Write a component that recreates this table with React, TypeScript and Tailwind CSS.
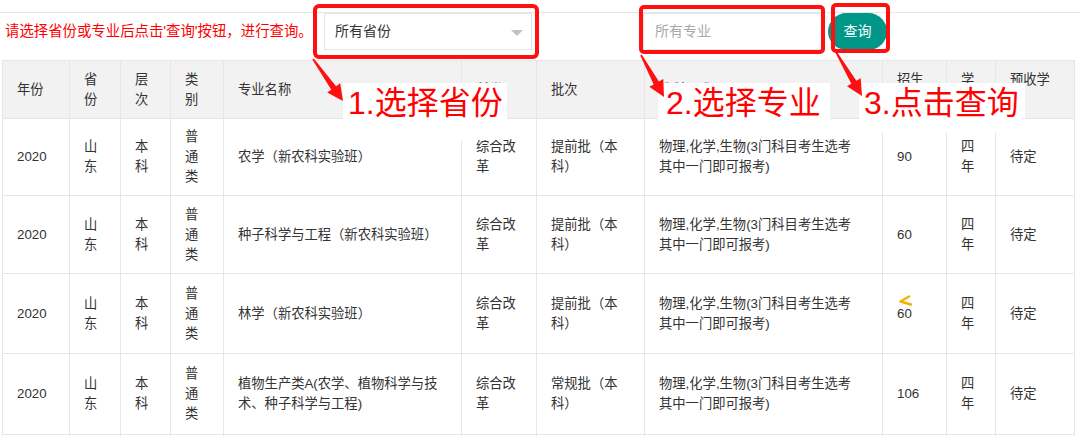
import React from 'react';

type Row = {
  major: string[];
  batch: string[];
  num: string;
  h: string;
  chevron?: boolean;
};

const rows: Row[] = [
  { major: ['农学（新农科实验班）'], batch: ['提前批（本', '科）'], num: '90', h: 'h-[77px]' },
  { major: ['种子科学与工程（新农科实验班）'], batch: ['提前批（本', '科）'], num: '60', h: 'h-[78px]' },
  { major: ['林学（新农科实验班）'], batch: ['提前批（本', '科）'], num: '60', h: 'h-[80px]', chevron: true },
  { major: ['植物生产类A(农学、植物科学与技', '术、种子科学与工程)'], batch: ['常规批（本', '科）'], num: '106', h: 'h-[81px]' },
  { major: ['园艺'], batch: ['常规批（本', '科）'], num: '80', h: 'h-[80px]' },
];

const GRID =
  'grid grid-cols-[67px_51px_50px_53px_238px_75px_108px_238px_64px_49px_79px]';

function Cell({ lines, className = '', children }: { lines?: string[]; className?: string; children?: React.ReactNode }) {
  return (
    <div className={`relative flex flex-col justify-center border-b border-r border-[#e6e6e6] pl-[14px] text-[13.3px] leading-[20px] ${className}`}>
      {lines?.map((l, i) => (
        <div key={i} className="whitespace-nowrap">
          {l}
        </div>
      ))}
      {children}
    </div>
  );
}

function arrowPoints(sx: number, sy: number, tx: number, ty: number) {
  const headLen = 16;
  const headHalf = 8;
  const s0 = 0.8;
  const s1 = 3;
  const dx = tx - sx;
  const dy = ty - sy;
  const L = Math.hypot(dx, dy);
  const ux = dx / L;
  const uy = dy / L;
  const nx = -uy;
  const ny = ux;
  const bx = tx - ux * headLen;
  const by = ty - uy * headLen;
  const pts = [
    [sx + nx * s0, sy + ny * s0],
    [bx + nx * s1, by + ny * s1],
    [bx + nx * headHalf, by + ny * headHalf],
    [tx, ty],
    [bx - nx * headHalf, by - ny * headHalf],
    [bx - nx * s1, by - ny * s1],
    [sx - nx * s0, sy - ny * s0],
  ];
  return pts.map((p) => `${p[0].toFixed(1)},${p[1].toFixed(1)}`).join(' ');
}

export default function App() {
  const header: { lines: string[] }[] = [
    { lines: ['年份'] },
    { lines: ['省', '份'] },
    { lines: ['层', '次'] },
    { lines: ['类', '别'] },
    { lines: ['专业名称'] },
    { lines: ['科类'] },
    { lines: ['批次'] },
    { lines: ['选科要求'] },
    { lines: ['招生', '计划'] },
    { lines: ['学', '制'] },
    { lines: ['预收学', '费'] },
  ];

  return (
    <div className="relative h-[436px] w-[1080px] overflow-hidden bg-white text-[#333] font-['Liberation_Sans','Noto_Sans_CJK_SC',sans-serif]">
      {/* filter bar */}
      <div className="pt-[12px]">
        <div className="flex h-[38px] items-start border-t border-[#e6e6e6]">
          <div className="flex h-[37px] w-[324px] items-center pl-[5px] text-[14.4px] text-[#ff0000] whitespace-nowrap">
            请选择省份或专业后点击'查询'按钮，进行查询。
          </div>
          <div className="flex h-[37px] w-[208px] items-center justify-between border border-[#e6e6e6] bg-white pl-[10px] pr-[8px] text-[14px] text-[#333]">
            <span>所有省份</span>
            <span className="mt-[3px] h-0 w-0 border-x-[6px] border-t-[6px] border-x-transparent border-t-[#c2c2c2]" />
          </div>
          <div className="ml-[111px] flex h-[37px] w-[180px] items-center border border-[#e6e6e6] bg-white pl-[11px] text-[14px] text-[#a9a9a9]">
            所有专业
          </div>
          <div className="ml-[5px] flex h-[37px] w-[59px] items-center justify-center rounded-full bg-[#009688] text-[14px] text-white">
            查询
          </div>
        </div>
      </div>

      {/* table */}
      <div className="ml-[2px] mt-[10px] w-[1073px] border-l border-t border-[#e6e6e6]">
        <div className={`${GRID} h-[58px] bg-[#f2f2f2]`}>
          {header.map((h, i) => (
            <Cell key={i} lines={h.lines} />
          ))}
        </div>
        {rows.map((r, ri) => (
          <div key={ri} className={`${GRID} ${r.h}`}>
            <Cell lines={['2020']} />
            <Cell lines={['山', '东']} />
            <Cell lines={['本', '科']} />
            <Cell lines={['普', '通', '类']} />
            <Cell lines={r.major} />
            <Cell lines={['综合改', '革']} />
            <Cell lines={r.batch} />
            <Cell lines={['物理,化学,生物(3门科目考生选考', '其中一门即可报考)']} />
            <Cell lines={[r.num]}>
              {r.chevron && (
                <svg className="absolute left-[14px] top-[20px]" width="16" height="13" viewBox="0 0 16 13">
                  <polyline points="12,2.5 3.5,7.5 14,10.5" fill="none" stroke="#f5b301" strokeWidth="2.6" strokeLinecap="round" strokeLinejoin="round" />
                </svg>
              )}
            </Cell>
            <Cell lines={['四', '年']} />
            <Cell lines={['待定']} />
          </div>
        ))}
      </div>

      {/* annotations: red boxes */}
      <div className="absolute left-[313px] top-[4px] h-[55px] w-[226px] rounded-[6px] border-[4px] border-[#ff1010]" />
      <div className="absolute left-[639px] top-[5px] h-[49px] w-[186px] rounded-[5px] border-[4px] border-[#ff1010]" />
      <div className="absolute left-[831px] top-[3px] h-[50px] w-[59px] rounded-[5px] border-[4px] border-[#ff1010]" />

      {/* annotation labels */}
      <div className="absolute left-[343px] top-[83px] h-[57px] w-[164px] bg-white pl-[5px] pt-[1px] text-[32px] leading-[38px] text-[#ff0000] whitespace-nowrap">
        1.选择省份
      </div>
      <div className="absolute left-[658px] top-[83px] h-[39px] w-[172px] bg-white pl-[8px] pt-[1px] text-[32px] leading-[38px] text-[#ff0000] whitespace-nowrap">
        2.选择专业
      </div>
      <div className="absolute left-[859px] top-[83px] h-[49px] w-[166px] bg-white pl-[5px] pt-[1px] text-[32px] leading-[38px] text-[#ff0000] whitespace-nowrap">
        3.点击查询
      </div>

      {/* arrows */}
      <svg className="pointer-events-none absolute left-0 top-0" width="1080" height="436" viewBox="0 0 1080 436">
        <polygon points={arrowPoints(313, 59, 343, 101)} fill="#ff1010" />
        <polygon points={arrowPoints(641, 55, 664, 97)} fill="#ff1010" />
        <polygon points={arrowPoints(836, 52, 862, 96)} fill="#ff1010" />
      </svg>
    </div>
  );
}
